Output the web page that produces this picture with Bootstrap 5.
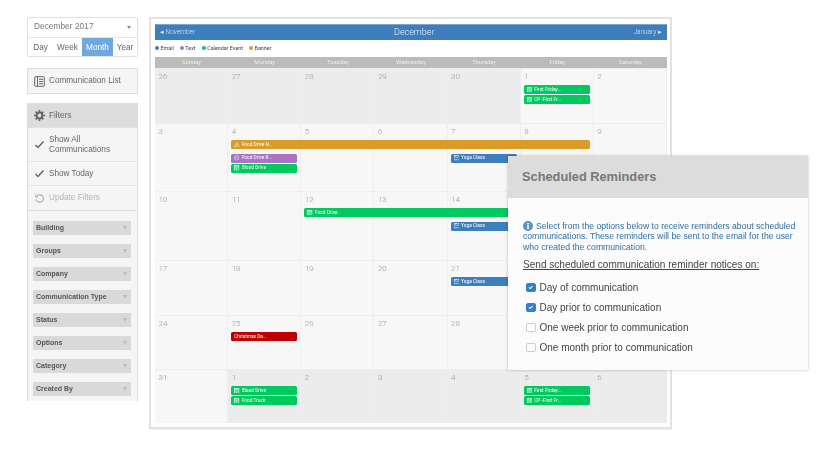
<!DOCTYPE html>
<html lang="en"><head><meta charset="utf-8"><title>Calendar</title>
<link rel="stylesheet" href="https://cdn.jsdelivr.net/npm/bootstrap@5.3.0/dist/css/bootstrap.min.css">
<style>
html,body{height:455px;overflow:hidden;background:#fff}
body{font-family:"Liberation Sans",Arial,sans-serif;color:#666}
.stage{position:relative;width:830px;height:455px;padding:17px 0 0 27px;gap:11px}
.side{width:111px;flex:none;filter:blur(.3px)}
.datebox{height:40px;border:1px solid #e0e0e0;border-radius:2px;font-size:8.2px;margin-bottom:11px;background:#fff;overflow:hidden}
.datepick{height:20px;padding:0 6px;color:#777;border-bottom:1px solid #e4e4e4;letter-spacing:.1px}
.datepick i{width:0;height:0;border:2.5px solid transparent;border-top:3px solid #888;border-bottom:0}
.range>span{height:19px;line-height:19px;text-align:center;color:#666}
.range .d{width:25px}.range .w{width:29px}.range .m{width:31px;background:#6fa8dc;color:#fff}.range .y{flex:1}
.sidelink{height:26px;border:1px solid #ddd;background:#f5f5f5;font-size:8.2px;padding:1px 0 0 6px;gap:4px;margin-bottom:9px}
.filterpanel{border:1px solid #ddd;border-bottom:0;background:#f5f5f5;height:298px;border-radius:0}
.filterpanel>*{flex:none}
.filterpanel .list-group-item{background:transparent;border-color:#e2e2e2;border-width:0 0 1px;padding:0 6px;gap:4px;color:#666;font-size:8.2px;line-height:10px}
.filterpanel .fh{height:24px;background:#dcdcdc!important}
.filterpanel .fa{height:34px}.filterpanel .ft{height:24px}.filterpanel .fu{height:25px;color:#b5b5b5!important;border-color:#ddd!important;margin-bottom:10px}
.ico{width:11px;height:11px;flex:none}
.fbar{height:14px;margin:0 6px 9px 5px;background:#d9d9d9;padding:0 3px;font-size:7px;font-weight:700;color:#555}
.fbar i{width:0;height:0;border:2.5px solid transparent;border-top:4px solid #bdbdbd;border-bottom:0;margin-right:1px}
.frame{width:523px;height:412px;flex:none;border:2px solid #e2e2e2;border-radius:1px;padding:5px 3px 4px 4px;background:#fff;box-shadow:0 1px 1px #eee;font-family:Roboto,sans-serif;filter:blur(.4px)}
.calhead{height:16px;background:#3f7ebd;color:#dce8f4;font-size:6.5px;font-weight:300;padding:0 5px;border-top:1px solid #7ba6d2}
.calhead .ttl{font-size:9px;color:#e8f0f8}
.legend{height:17px;font-size:5.4px;color:#444;gap:6px}
.legend span{gap:1.5px}
.legend b{width:4px;height:4px;border-radius:50%;display:block}
.dow{height:11px;background:#bbb;color:#eee;font-size:5.8px}
.dow>span{flex:1 1 0;text-align:center}
.week{display:grid;grid-template-columns:repeat(7,minmax(0,1fr));grid-template-rows:16px auto auto auto 1fr;border-top:1px solid #eee}
.h55{height:55px}.h68{height:68px}.h69{height:69px}.h54{height:54px}
.cell{grid-row:1/span 5;background:#f7f7f7;border-right:1px solid #eee;padding:3px 0 0 3.5px;font-size:8px;font-weight:300;line-height:10px;color:#999}
.cell.o{background:#ececec}
.cell:nth-child(1){grid-column:1}.cell:nth-child(2){grid-column:2}.cell:nth-child(3){grid-column:3}.cell:nth-child(4){grid-column:4}.cell:nth-child(5){grid-column:5}.cell:nth-child(6){grid-column:6}.cell:nth-child(7){grid-column:7}
.ev{height:9px;margin:0 4px 1px 3px;border-radius:1.5px;color:#fff;font-size:4.8px;font-weight:400;padding-left:3px;gap:2px;white-space:nowrap;z-index:1;overflow:hidden}
.ev svg{width:5.5px;height:5.5px;flex:none}
.gap{margin-bottom:4.5px}
.g{background:#00c95f}.p{background:#a974c1}.o2{background:#d99c27}.b{background:#3f7ebd}.r{background:#bf0000}
.r2{grid-row:2}.r3{grid-row:3}.r4{grid-row:4}
.c2{grid-column:2}.c3{grid-column:3}.c5{grid-column:5}.c6{grid-column:6}
.sp2{grid-column:2/span 5}
.sp3{grid-column:3/span 4;margin-right:0}
.popup{position:absolute;left:508px;top:156px;width:300px;height:214px;background:#fcfcfc;box-shadow:0 0 3px rgba(0,0,0,.25);z-index:5;border:0;border-radius:0;filter:blur(.25px)}
.popup .card-header{height:42px;background:#dcdcdc;border:0;border-radius:0;padding:0 14px;font-size:12.8px;font-weight:700;color:#777}
.popup .card-body{padding:23px 10px 0 15px}
.note{font-size:8.65px;line-height:10.4px;color:#2f6f9f;margin:0 0 6px}
.note svg{width:10px;height:10px;vertical-align:-2px;margin-right:3px}
.sendlbl{font-size:10.05px;line-height:13px;color:#444;text-decoration:underline;margin-bottom:9.5px}
.popup .form-check{min-height:0;height:20px;margin:0;padding:0 0 0 15px;font-size:10px;line-height:13px;color:#444;display:flex;align-items:flex-start}
.popup .form-check-input{width:9.5px;height:9.5px;margin:2px 4px 0 -12px;border-color:#ccc;border-radius:2px;float:none;flex:none}
.popup .form-check-input:checked{background-color:#2f7fd8;border-color:#2f7fd8}
.popup .form-check-label{opacity:1}
</style></head><body>
<svg width="0" height="0" class="position-absolute">
<symbol id="cal" viewBox="0 0 10 10"><rect width="10" height="10" fill="#fff" opacity=".75"/><path d="M2 3h6M2 5h2v3H2zM6 5h2v3H6z" stroke="#00c95f" fill="none"/></symbol>
<symbol id="mail" viewBox="0 0 10 10"><rect y="1" width="10" height="8" fill="none" stroke="#fff" stroke-width="1.2"/><path d="M0 2l5 3 5-3" fill="none" stroke="#fff"/></symbol>
<symbol id="msg" viewBox="0 0 10 10"><circle cx="5" cy="5" r="4.2" fill="none" stroke="#fff"/><path d="M3 5h4" stroke="#fff"/></symbol>
<symbol id="warn" viewBox="0 0 10 10"><path d="M5 1L9.5 9H.5z" fill="none" stroke="#fff"/><path d="M5 4v2.5" stroke="#fff"/></symbol>
</svg>
<div class="stage d-flex align-items-start">
 <div class="side">
  <div class="datebox">
   <div class="datepick d-flex align-items-center justify-content-between"><span>December 2017</span><i></i></div>
   <div class="range d-flex"><span class="d">Day</span><span class="w">Week</span><span class="m">Month</span><span class="y">Year</span></div>
  </div>
  <div class="sidelink d-flex align-items-center">
   <svg class="ico" viewBox="0 0 11 11"><rect x=".7" y=".7" width="9.6" height="9.6" rx="1" fill="none" stroke="#666"/><path d="M3.5 1v9M5 3.3h4M5 5.5h4M5 7.7h4" stroke="#666" fill="none"/></svg>
   <span>Communication List</span>
  </div>
  <div class="filterpanel list-group">
   <div class="list-group-item fh d-flex align-items-center"><svg class="ico" viewBox="0 0 11 11"><circle cx="5.5" cy="5.5" r="2.9" fill="none" stroke="#666" stroke-width="2"/><path d="M5.5 0v2M5.5 9v2M0 5.5h2M9 5.5h2M1.6 1.6l1.4 1.4M8 8l1.4 1.4M1.6 9.4L3 8M8 3l1.4-1.4" stroke="#666" stroke-width="1.6"/></svg><span>Filters</span></div>
   <div class="list-group-item fa d-flex align-items-center"><svg class="ico" viewBox="0 0 11 11"><path d="M1.5 6l2.5 2.5L9.5 2.5" fill="none" stroke="#666" stroke-width="1.5"/></svg><span>Show All Communications</span></div>
   <div class="list-group-item ft d-flex align-items-center"><svg class="ico" viewBox="0 0 11 11"><path d="M1.5 6l2.5 2.5L9.5 2.5" fill="none" stroke="#666" stroke-width="1.5"/></svg><span>Show Today</span></div>
   <div class="list-group-item fu d-flex align-items-center"><svg class="ico" viewBox="0 0 11 11"><path d="M3 2.8A3.8 3.8 0 1 1 2 6.5" fill="none" stroke="#bbb" stroke-width="1.4"/><path d="M1 1v3.5h3.5z" fill="#bbb"/></svg><span>Update Filters</span></div>
   <div class="fbar d-flex align-items-center justify-content-between"><span>Building</span><i></i></div>
   <div class="fbar d-flex align-items-center justify-content-between"><span>Groups</span><i></i></div>
   <div class="fbar d-flex align-items-center justify-content-between"><span>Company</span><i></i></div>
   <div class="fbar d-flex align-items-center justify-content-between"><span>Communication Type</span><i></i></div>
   <div class="fbar d-flex align-items-center justify-content-between"><span>Status</span><i></i></div>
   <div class="fbar d-flex align-items-center justify-content-between"><span>Options</span><i></i></div>
   <div class="fbar d-flex align-items-center justify-content-between"><span>Category</span><i></i></div>
   <div class="fbar d-flex align-items-center justify-content-between"><span>Created By</span><i></i></div>
  </div>
 </div>
 <div class="frame">
  <div class="calhead d-flex align-items-center justify-content-between"><span>&#9666; November</span><span class="ttl">December</span><span>January &#9656;</span></div>
  <div class="legend d-flex align-items-center">
   <span class="d-flex align-items-center"><b class="b"></b>Email</span>
   <span class="d-flex align-items-center"><b class="p"></b>Text</span>
   <span class="d-flex align-items-center"><b class="g"></b>Calendar Event</span>
   <span class="d-flex align-items-center"><b class="o2"></b>Banner</span>
  </div>
  <div class="dow d-flex align-items-center"><span>Sunday</span><span>Monday</span><span>Tuesday</span><span>Wednesday</span><span>Thursday</span><span>Friday</span><span>Saturday</span></div>
  <div class="week h55">
   <div class="cell o">26</div><div class="cell o">27</div><div class="cell o">28</div><div class="cell o">29</div><div class="cell o">30</div><div class="cell">1</div><div class="cell">2</div>
   <div class="ev g c6 r2 d-flex align-items-center"><svg><use href="#cal"/></svg>First Friday...</div>
   <div class="ev g c6 r3 d-flex align-items-center"><svg><use href="#cal"/></svg>CP -First Fr...</div>
  </div>
  <div class="week h68">
   <div class="cell">3</div><div class="cell">4</div><div class="cell">5</div><div class="cell">6</div><div class="cell">7</div><div class="cell">8</div><div class="cell">9</div>
   <div class="ev o2 sp2 r2 gap d-flex align-items-center"><svg><use href="#warn"/></svg>Food Drive N...</div>
   <div class="ev p c2 r3 d-flex align-items-center"><svg><use href="#msg"/></svg>Food Drive R...</div>
   <div class="ev g c2 r4 d-flex align-items-center"><svg><use href="#cal"/></svg>Blood Drive</div>
   <div class="ev b c5 r3 d-flex align-items-center"><svg><use href="#mail"/></svg>Yoga Class</div>
  </div>
  <div class="week h69">
   <div class="cell">10</div><div class="cell">11</div><div class="cell">12</div><div class="cell">13</div><div class="cell">14</div><div class="cell"></div><div class="cell"></div>
   <div class="ev g sp3 r2 gap d-flex align-items-center"><svg><use href="#cal"/></svg>Food Drive</div>
   <div class="ev b c5 r3 d-flex align-items-center"><svg><use href="#mail"/></svg>Yoga Class</div>
  </div>
  <div class="week h55">
   <div class="cell">17</div><div class="cell">18</div><div class="cell">19</div><div class="cell">20</div><div class="cell">21</div><div class="cell"></div><div class="cell"></div>
   <div class="ev b c5 r2 d-flex align-items-center"><svg><use href="#mail"/></svg>Yoga Class</div>
  </div>
  <div class="week h54">
   <div class="cell">24</div><div class="cell">25</div><div class="cell">26</div><div class="cell">27</div><div class="cell">28</div><div class="cell"></div><div class="cell"></div>
   <div class="ev r c2 r2 d-flex align-items-center">Christmas Da...</div>
  </div>
  <div class="week h54">
   <div class="cell">31</div><div class="cell o">1</div><div class="cell o">2</div><div class="cell o">3</div><div class="cell o">4</div><div class="cell o">5</div><div class="cell o">6</div>
   <div class="ev g c2 r2 d-flex align-items-center"><svg><use href="#cal"/></svg>Blood Drive</div>
   <div class="ev g c2 r3 d-flex align-items-center"><svg><use href="#cal"/></svg>Food Truck</div>
   <div class="ev g c6 r2 d-flex align-items-center"><svg><use href="#cal"/></svg>First Friday...</div>
   <div class="ev g c6 r3 d-flex align-items-center"><svg><use href="#cal"/></svg>CP -First Fr...</div>
  </div>
 </div>
 <div class="popup card">
  <div class="card-header d-flex align-items-center">Scheduled Reminders</div>
  <div class="card-body">
   <p class="note"><svg viewBox="0 0 10 10"><circle cx="5" cy="5" r="5" fill="#5b93c4"/><rect x="4.2" y="4.2" width="1.6" height="3.8" fill="#fff"/><rect x="4.2" y="2" width="1.6" height="1.6" fill="#fff"/></svg>Select from the options below to receive reminders about scheduled communications. These reminders will be sent to the email for the user who created the communication.</p>
   <div class="sendlbl">Send scheduled communication reminder notices on:</div>
   <div class="form-check"><input class="form-check-input" type="checkbox" id="a" checked><label class="form-check-label" for="a">Day of communication</label></div>
   <div class="form-check"><input class="form-check-input" type="checkbox" id="b" checked><label class="form-check-label" for="b">Day prior to communication</label></div>
   <div class="form-check"><input class="form-check-input" type="checkbox" id="c"><label class="form-check-label" for="c">One week prior to communication</label></div>
   <div class="form-check"><input class="form-check-input" type="checkbox" id="d"><label class="form-check-label" for="d">One month prior to communication</label></div>
  </div>
 </div>
</div>
<script src="https://cdn.jsdelivr.net/npm/bootstrap@5.3.0/dist/js/bootstrap.bundle.min.js"></script>
</body></html>
